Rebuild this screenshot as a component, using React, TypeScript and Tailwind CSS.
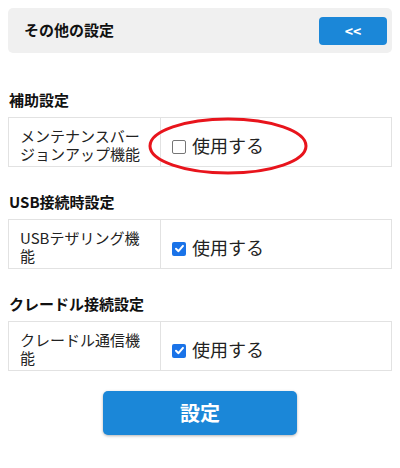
import React from "react";

const font = { fontFamily: '"Noto Sans CJK JP", "Noto Sans", sans-serif' };

function Check({ checked }: { checked: boolean }) {
  if (checked) {
    return (
      <span className="mt-[3px] flex h-[14px] w-[14px] shrink-0 items-center justify-center rounded-[2px] bg-[#1a73e8]">
        <svg width="11" height="11" viewBox="0 0 12 12">
          <path d="M2.2 6.3 L4.9 8.9 L9.8 3.2" fill="none" stroke="#fff" strokeWidth="2.2" strokeLinecap="round" strokeLinejoin="round" />
        </svg>
      </span>
    );
  }
  return (
    <span className="mt-[3px] h-[14px] w-[14px] shrink-0 rounded-[2px] border border-[#767676] bg-white" />
  );
}

function Section({
  title,
  label,
  checked,
  circled,
  first,
}: {
  title: string;
  label: React.ReactNode;
  checked: boolean;
  circled?: boolean;
  first?: boolean;
}) {
  return (
    <div className={first ? "mt-[36px]" : "mt-[24px]"}>
      <div className="mb-[6px] pl-[1px] text-[15px] font-bold leading-[22px] text-[#111]">{title}</div>
      <div className="relative">
        <div className="flex border border-[#e2e2e2]">
          <div className="w-[152px] shrink-0 border-r border-[#e2e2e2] pl-[11px] pr-[6px] pt-[9px] pb-[3px] text-[15px] leading-[18px] text-[#222]">
            {label}
          </div>
          <div className="flex flex-1 items-center gap-[6px] pl-[11px] pt-[6px]">
            <Check checked={checked} />
            <span className="text-[18px] leading-[24px] text-[#222]">使用する</span>
          </div>
        </div>
        {circled && (
          <svg className="pointer-events-none absolute left-[140px] top-0" width="162" height="60" viewBox="0 0 162 60">
            <ellipse cx="80" cy="29" rx="78" ry="27" fill="none" stroke="#e8141c" strokeWidth="3" />
          </svg>
        )}
      </div>
    </div>
  );
}

export default function App() {
  return (
    <div className="min-h-[468px] w-[400px] bg-white px-2 pt-2" style={font}>
      <div className="flex h-[45px] items-center justify-between rounded-[5px] bg-[#f0f0f0] pl-[16px] pr-[5px]">
        <span className="text-[15px] font-bold text-[#111]">その他の設定</span>
        <button className="mt-[1px] flex h-[28px] w-[68px] items-center justify-center rounded-[4px] bg-[#1b87d8] text-[14px] font-bold text-white">
          &lt;&lt;
        </button>
      </div>

      <Section
        first
        title="補助設定"
        label={
          <>
            メンテナンスバー
            <br />
            ジョンアップ機能
          </>
        }
        checked={false}
        circled
      />
      <Section
        title="USB接続時設定"
        label={
          <>
            USBテザリング機
            <br />
            能
          </>
        }
        checked
      />
      <Section
        title="クレードル接続設定"
        label={
          <>
            クレードル通信機
            <br />
            能
          </>
        }
        checked
      />

      <div className="mt-[20px] flex justify-center">
        <button className="h-[44px] w-[194px] rounded-[5px] bg-[#1b87d8] text-[20px] font-bold text-white shadow-[0_1px_3px_rgba(0,0,0,0.3)]">
          設定
        </button>
      </div>
    </div>
  );
}
